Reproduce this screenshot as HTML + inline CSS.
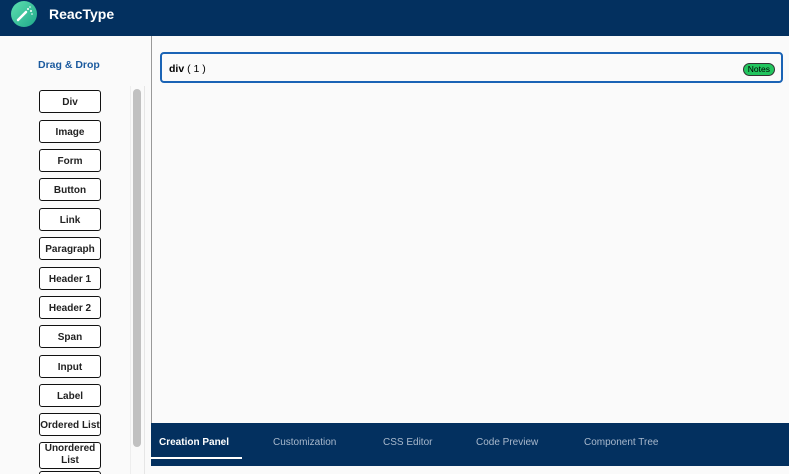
<!DOCTYPE html><html><head><style>
html,body{margin:0;width:789px;height:474px;overflow:hidden}
body{background:#fafafa;font-family:"Liberation Sans",sans-serif;position:relative}
.hdr{position:absolute;left:0;top:0;width:789px;height:36px;background:#03305f}
.logo{position:absolute;left:11px;top:1px;width:26px;height:26px;border-radius:50%;background:linear-gradient(135deg,#5ee0b0,#1fa88a)}
.title{position:absolute;left:49px;top:6px;color:#fff;font-weight:bold;font-size:14px}
.dd{position:absolute;left:38px;top:59px;color:#1b5a9e;font-weight:bold;font-size:10.5px}
.b{position:absolute;left:39px;width:60px;height:21px;border:1.3px solid #111;border-radius:3px;background:#fff;font-size:10px;font-weight:bold;text-align:center;line-height:23px;color:#222;box-sizing:content-box}
.track{position:absolute;left:130px;top:86px;width:13px;height:388px;border-left:1px solid #eee;border-right:1px solid #e6e6e6}
.thumb{position:absolute;left:133px;top:89px;width:8px;height:358px;background:#c1c1c1;border-radius:4px}
.main{position:absolute;left:151px;top:36px;width:638px;height:387px;border-left:1.5px solid #999;background:#fafafa}
.div{position:absolute;left:160px;top:52px;width:619px;height:27px;border:2px solid #1a63b5;border-radius:4px;background:#fafafa}
.div span{position:absolute;left:7px;top:9px;font-size:10.5px}
.notes{position:absolute;right:6px;top:9px;font-size:8.5px;background:#22c55e;border:1px solid #333;border-radius:7px;padding:0 4px;line-height:11px}
.tabs{position:absolute;left:151px;top:423px;width:638px;height:43px;background:#03305f}
.t{position:absolute;top:13px;color:#a8b8cc;font-size:10px}
.ul{position:absolute;left:0;top:34px;width:91px;height:1.5px;background:#fff}
</style></head><body>
<div class="hdr"><div class="logo"><svg width="26" height="26" viewBox="0 0 26 26"><path d="M7 19 L15 11" stroke="#fff" stroke-width="2.5" stroke-linecap="round"/><circle cx="17" cy="8" r="1" fill="#fff"/><circle cx="20" cy="10" r="1" fill="#fff"/><circle cx="19" cy="6" r="0.8" fill="#fff"/><circle cx="21" cy="13" r="0.8" fill="#fff"/></svg></div><div class="title">ReacType</div></div>
<div class="dd">Drag &amp; Drop</div>
<div class="b" style="top:90px">Div</div>
<div class="b" style="top:120px">Image</div>
<div class="b" style="top:149px">Form</div>
<div class="b" style="top:178px">Button</div>
<div class="b" style="top:208px">Link</div>
<div class="b" style="top:237px">Paragraph</div>
<div class="b" style="top:267px">Header 1</div>
<div class="b" style="top:296px">Header 2</div>
<div class="b" style="top:325px">Span</div>
<div class="b" style="top:355px">Input</div>
<div class="b" style="top:384px">Label</div>
<div class="b" style="top:413px">Ordered List</div>
<div class="b" style="top:442px;height:25px;line-height:12px">Unordered List</div>
<div class="b" style="top:471px"></div>
<div class="track"></div><div class="thumb"></div>
<div class="main"></div>
<div class="div"><span><b>div</b> ( 1 )</span><div class="notes">Notes</div></div>
<div class="tabs">
<div class="t" style="left:8px;top:14px;color:#fff;font-weight:bold">Creation Panel</div>
<div class="t" style="left:122px;top:14px">Customization</div>
<div class="t" style="left:232px;top:14px">CSS Editor</div>
<div class="t" style="left:325px;top:14px">Code Preview</div>
<div class="t" style="left:433px;top:14px">Component Tree</div>
<div class="ul"></div>
</div>
</body></html>
